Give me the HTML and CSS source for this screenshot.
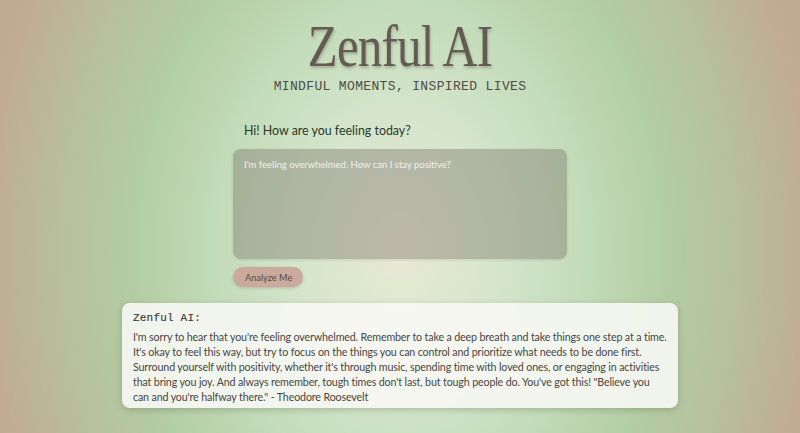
FILE: index.html
```html
<!DOCTYPE html>
<html lang="en">
<head>
<meta charset="utf-8">
<title>Zenful AI</title>
<link rel="stylesheet" href="styles.css">
</head>
<body>
<main class="page">
  <header class="hero">
    <h1 class="title">Zenful AI</h1>
    <p class="tagline">MINDFUL MOMENTS, INSPIRED LIVES</p>
  </header>
  <section class="ask">
    <label class="prompt" for="feel">Hi! How are you feeling today?</label>
    <textarea id="feel" class="entry" placeholder="I'm feeling overwhelmed. How can I stay positive?"></textarea>
    <button class="analyze" type="button">Analyze Me</button>
  </section>
  <section class="reply">
    <h2 class="reply-name">Zenful AI:</h2>
    <p class="reply-text">I'm sorry to hear that you're feeling overwhelmed. Remember to take a deep breath and take things one step at a time. It's okay to feel this way, but try to focus on the things you can control and prioritize what needs to be done first. Surround yourself with positivity, whether it's through music, spending time with loved ones, or engaging in activities that bring you joy. And always remember, tough times don't last, but tough people do. You've got this! "Believe you can and you're halfway there." - Theodore Roosevelt</p>
  </section>
</main>
</body>
</html>
```

FILE: styles.css
```css
html, body {
  margin: 0;
  padding: 0;
  height: 100%;
}
body {
  font-family: "Lato", "Open Sans", sans-serif;
  background: radial-gradient(ellipse 420px 560px at 400px 250px, #e9e9d4 0%, #d4e5cb 25%, #c2dbb8 45%, #b3cda4 63%, #b8bf9d 81%, #c1aa93 100%);
  overflow: hidden;
}
.page {
  display: flex;
  flex-direction: column;
  align-items: center;
  height: 433px;
}
.hero {
  display: flex;
  flex-direction: column;
  align-items: center;
  padding-top: 14px;
}
.title {
  margin: 0;
  font-family: "Liberation Serif", serif;
  font-weight: 400;
  font-size: 59px;
  line-height: 64px;
  color: #645c52;
  letter-spacing: -1px;
  transform: scaleX(0.83);
  text-shadow: 1px 2px 3px rgba(70, 60, 50, 0.3);
}
.tagline {
  margin: 0;
  margin-top: 1px;
  font-family: "Liberation Mono", monospace;
  font-size: 13px;
  line-height: 16px;
  letter-spacing: 0.35px;
  color: #4f4c45;
}
.ask {
  width: 334px;
  display: flex;
  flex-direction: column;
  align-items: flex-start;
  margin-top: 27px;
}
.prompt {
  font-size: 12.4px;
  line-height: 18px;
  color: #2a3826;
  padding-left: 11px;
}
.entry {
  box-sizing: border-box;
  width: 334px;
  height: 110px;
  margin-top: 9px;
  border: none;
  border-radius: 8px;
  padding: 10px 11px;
  background: rgba(112, 100, 94, 0.36);
  box-shadow: 0 1px 3px rgba(60, 60, 50, 0.15);
  font-family: "Lato", "Open Sans", sans-serif;
  font-size: 9.5px;
  color: #f4f4ee;
  resize: none;
  outline: none;
}
.entry::placeholder {
  color: #f1f0ea;
  opacity: 1;
}
.analyze {
  margin-top: 8px;
  height: 20px;
  padding: 0 11px 0 12px;
  border: none;
  border-radius: 10px;
  background: #c9aa9c;
  box-shadow: 0 1px 3px rgba(90, 70, 60, 0.25);
  font-family: "Lato", "Open Sans", sans-serif;
  font-size: 9.2px;
  color: #574a44;
}
.reply {
  box-sizing: border-box;
  width: 556px;
  margin-top: 16px;
  padding: 7px 11px 4px;
  background: rgba(246, 247, 242, 0.92);
  border-radius: 8px;
  box-shadow: 0 2px 6px rgba(60, 70, 50, 0.25);
}
.reply-name {
  margin: 0;
  font-family: "Liberation Mono", monospace;
  font-weight: 400;
  font-size: 11px;
  line-height: 16px;
  letter-spacing: 0.2px;
  color: #3c3a36;
  -webkit-text-stroke: 0.15px #3c3a36;
}
.reply-text {
  margin: 3px 0 0;
  font-size: 10.7px;
  letter-spacing: -0.15px;
  line-height: 15px;
  color: #484643;
}
```
